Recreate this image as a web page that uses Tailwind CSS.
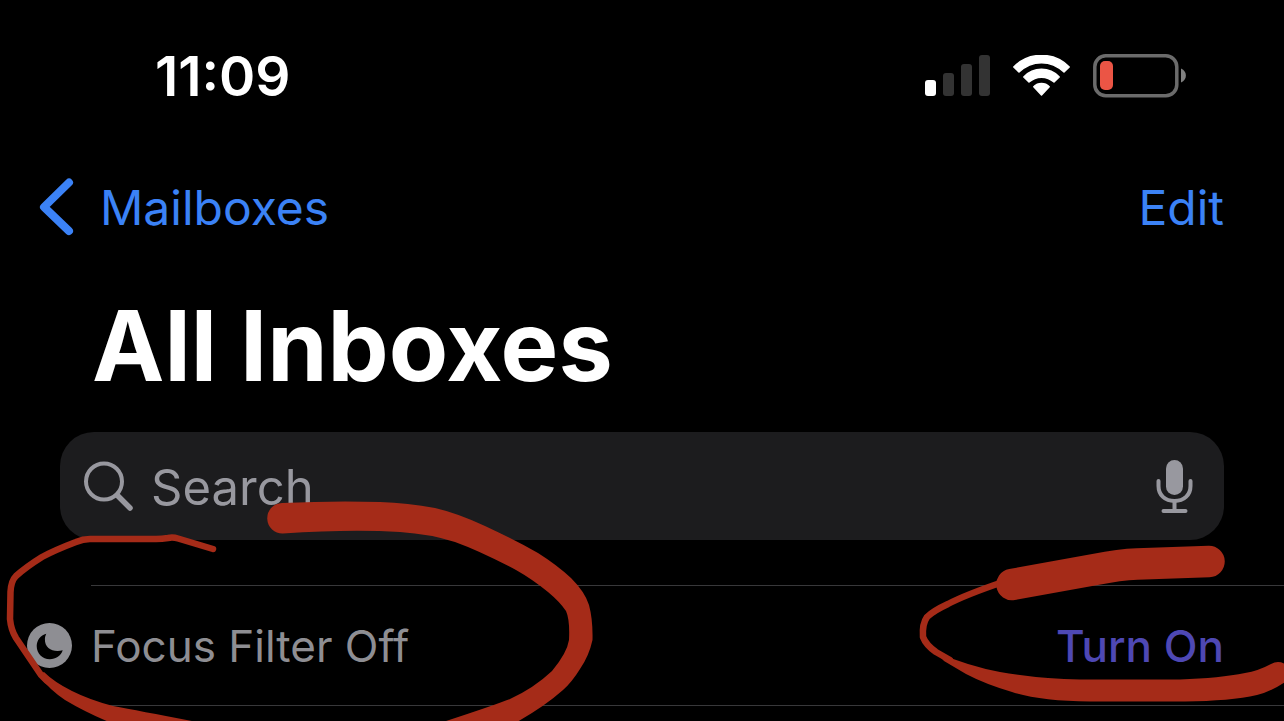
<!DOCTYPE html>
<html lang="en">
<head>
    <meta charset="UTF-8">
    <meta name="viewport" content="width=device-width, initial-scale=1.0">
    <title>All Inboxes</title>
    <script src="https://cdn.jsdelivr.net/npm/@tailwindcss/browser@4"></script>
</head>
<body class="bg-black text-white font-['Inter',sans-serif] overflow-hidden">
    <div class="relative min-h-screen overflow-hidden">
        <!-- Status Bar -->
        <div class="flex justify-between items-center h-[152px] pl-[155px] pr-24">
            <div class="text-[55px] leading-[60px] font-semibold">11:09</div>
            <div class="flex items-center gap-[22px]">
                <svg class="w-[66px] h-[42px]" viewBox="0 0 66 42" fill="#333333" aria-label="Signal">
                    <rect x="0" y="25" width="11" height="16" rx="3" fill="#fff"/>
                    <rect x="18" y="18" width="11" height="23" rx="3"/>
                    <rect x="36" y="9" width="11" height="32" rx="3"/>
                    <rect x="54" y="0" width="11" height="41" rx="3"/>
                </svg>
                <svg class="w-[58px] h-[42px]" viewBox="0 0 58 42" fill="#fff" stroke="#fff" stroke-width="1.5" stroke-linejoin="round" aria-label="Wi-Fi">
                    <path d="M0.800 12C16-3.500 41-3.500 56.200 12L51 17C38 4.500 19 4.500 6 17Z"/>
                    <path d="M10.800 22C20.500 11.800 36.500 11.800 46.200 22L41 27C34 20.500 23 20.500 16 27Z"/>
                    <path d="M20.800 31.800C25 27.500 32 27.500 36.200 31.800L28.500 40Z"/>
                </svg>
                <svg class="w-[95px] h-[44px]" viewBox="0 0 95 44" aria-label="Battery">
                    <rect x="1.800" y="1.800" width="82" height="40" rx="11" fill="none" stroke="#6b6b6b" stroke-width="3.500"/>
                    <rect x="7" y="7" width="13" height="29" rx="5" fill="#eb5545"/>
                    <path d="M88 14.500C94.500 17 94.500 26 88 28.500Z" fill="#808080"/>
                </svg>
            </div>
        </div>

        <!-- Navigation -->
        <div class="flex justify-between items-center h-[112px] pl-9 pr-15 text-[48px] leading-[60px] text-[#3b82f6]">
            <a href="#" class="flex items-center gap-[24px]">
                <svg class="w-10 h-[60px]" viewBox="0 0 40 60" fill="none" stroke="currentColor" stroke-width="8" stroke-linecap="round" stroke-linejoin="round" aria-hidden="true">
                    <path d="M33 4.500L8 29L33 53"/>
                </svg>
                Mailboxes
            </a>
            <button type="button">Edit</button>
        </div>

        <h1 class="px-[92px] pt-[22px] text-[97px] leading-[120px] font-bold">All Inboxes</h1>

        <!-- Search -->
        <div class="flex items-center h-[108px] mx-15 mt-[26px] pl-6 pr-[31px] rounded-[34px] bg-[#1c1c1e] text-[#98989f]">
            <label for="search" class="shrink-0">
                <svg class="w-[50px] h-[50px]" viewBox="0 0 50 50" fill="none" stroke="currentColor" stroke-linecap="round" aria-label="Search">
                    <circle cx="20" cy="20.500" r="18" stroke-width="4"/>
                    <path d="M33.500 34.500L46 47" stroke-width="5.500"/>
                </svg>
            </label>
            <input type="text" id="search" placeholder="Search" class="grow min-w-0 ml-[17px] h-[62px] pt-[2px] text-[49px] leading-[60px] placeholder:text-[#98989f] focus:outline-none">
            <button type="button" aria-label="Dictate">
                <svg class="w-[38px] h-[54px]" viewBox="0 0 38 54" fill="none" stroke="currentColor" stroke-width="4" stroke-linecap="round">
                    <rect x="11" y="1" width="17" height="35" rx="8.500" fill="currentColor" stroke="none"/>
                    <path d="M3.500 22V27C3.500 36 10 42 19.500 42S35.500 36 35.500 27V22M19.500 43V52M8.500 52H30.500"/>
                </svg>
            </button>
        </div>

        <!-- Focus Filter -->
        <div class="flex items-center mt-[45px] pl-[27px] text-[44px] leading-[52px]">
            <svg class="shrink-0 w-[45px] h-[45px] mr-[19px]" viewBox="0 0 45 45" aria-hidden="true">
                <circle cx="22.500" cy="22.500" r="22.500" fill="#8e8e93"/>
                <path d="M19.300 10.700C13.500 12 9.700 17.500 9.700 23C9.700 30.500 15.500 36.300 22.800 36.300C28.800 36.300 34 32.800 35.700 27.300C26.500 29.500 17.500 26 17.900 16C18 13.500 18.700 12 19.300 10.700Z" fill="#000"/>
            </svg>
            <div class="grow flex items-center justify-between h-[121px] pr-15 border-y border-[#38383a]">
                <span class="text-[#8e8e93]">Focus Filter Off</span>
                <button type="button" class="font-medium text-[#4e48b4]">Turn On</button>
            </div>
        </div>

        <!-- Marker drawing -->
        <svg class="absolute top-0 left-0 w-[1284px] h-[721px] pointer-events-none" viewBox="0 0 1284 721" fill="#a52b18" aria-hidden="true">
            <g fill="none" stroke="#a52b18" stroke-linecap="round" stroke-linejoin="round">
                <path d="M213 549L178 538.500Q173 537 168 538Q162 539 156 539H90Q83 539 76 542Q55 550 42 557Q26 567 16 576Q11 581 10.500 592L10 619Q11 630 16 638L41 675Q46 681 54 686" stroke-width="6.500"/>
                <path d="M1003 582Q965 595 948 604Q933 611 927 617Q922 624 923 637Q926 645 936 652L950 660" stroke-width="6.500"/>
                <path d="M1012 584.500L1095 569.500Q1120 564.500 1137 564L1209 561.500" stroke-width="31.500"/>
            </g>
            <path d="M282 503Q335 500.500 380 502Q408 503 435 508Q457 513 485 526Q515 540 538 553Q557 565 571 578Q585 592 589 605Q593 620 592.500 640Q589 656 580 669Q572 682 563 690Q545 706 517 722H443Q495 705 510 699Q534 688 552 671Q567 653 569 640Q570 620 566 611Q560 602 548 592Q532 579 516 570Q480 551 455 542Q430 534 400 532Q350 529 283 533.500A15 15 0 0 1 282 503Z"/>
            <path d="M38 675L44 672Q54 682 72 691Q90 700 113 706Q140 711 197 722H109Q85 712 65 700Q50 690 38 675Z"/>
            <path d="M936 652Q968 666 1000 672Q1040 679 1080 679.500H1180Q1220 678 1245 673Q1258 671 1271 664Q1278 660 1285 664V682Q1270 692 1257 695Q1230 701 1185 701.500H1090Q1040 701 1012 692Q985 684 966 674L944 661Z"/>
        </svg>
    </div>
</body>
</html>
